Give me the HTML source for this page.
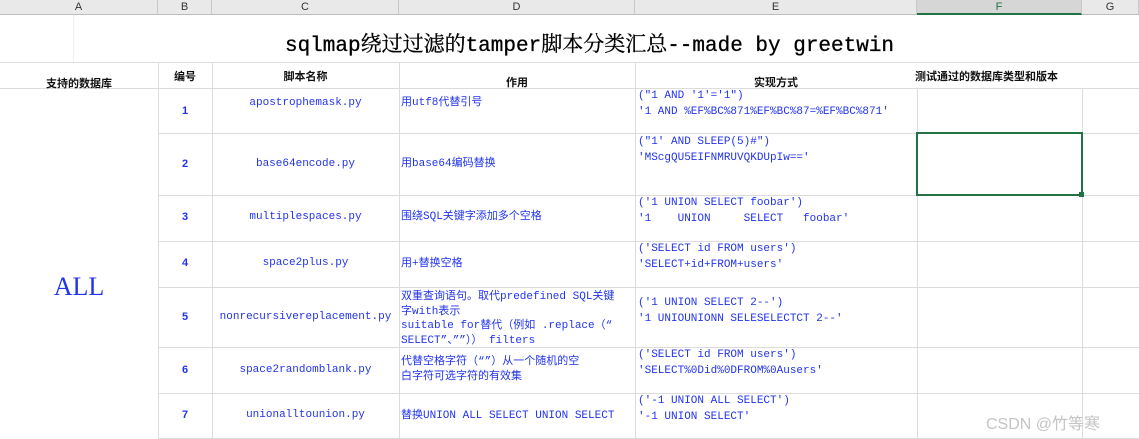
<!DOCTYPE html>
<html><head><meta charset="utf-8"><style>
*{margin:0;padding:0;box-sizing:border-box}
body{width:1139px;height:439px;background:#fff;position:relative;overflow:hidden;font-family:"Liberation Mono","Noto Sans CJK SC",monospace;}
.h{position:absolute;top:0;height:15px;background:#e9e9e9;border-right:1px solid #c8c8c8;border-bottom:1px solid #bdbdbd;font:11px "Liberation Sans",sans-serif;color:#333;text-align:center;line-height:15px}
.vl{position:absolute;width:1px;background:#dcdcdc}
.hl{position:absolute;height:1px;background:#dcdcdc}
.b{position:absolute;font:bold 11px "Liberation Sans","Noto Sans CJK SC",sans-serif;color:#111;white-space:nowrap}
.n{position:absolute;font:bold 11px "Liberation Sans",sans-serif;color:#2233ee;width:54px;text-align:center;left:158px}
.c{position:absolute;left:212px;width:187px;text-align:center;color:#2233ee;font-size:11px}
.d{position:absolute;left:401px;color:#2233ee;font-size:11px;line-height:14px;white-space:nowrap}
.e{position:absolute;left:638px;color:#2233ee;font-size:11px;line-height:16px;white-space:pre}
</style></head><body>
<div class="h" style="left:0;width:158px">A</div>
<div class="h" style="left:158px;width:54px">B</div>
<div class="h" style="left:212px;width:187px">C</div>
<div class="h" style="left:399px;width:236px">D</div>
<div class="h" style="left:635px;width:282px">E</div>
<div class="h" style="left:917px;width:165px;background:#d6d6d6;border-bottom:2px solid #217346;color:#217346">F</div>
<div class="h" style="left:1082px;width:57px">G</div>

<div style="position:absolute;left:0;top:28px;width:1139px;text-align:center;font:21px 'Liberation Mono','Noto Serif CJK SC',monospace;color:#000;padding-left:40px;-webkit-text-stroke:0.3px #000">sqlmap绕过过滤的tamper脚本分类汇总--made by greetwin</div>

<div class="hl" style="left:0;top:62px;width:1139px"></div>
<div class="hl" style="left:0;top:88px;width:1139px"></div>
<div class="hl" style="left:158px;top:133px;width:981px"></div>
<div class="hl" style="left:158px;top:195px;width:981px"></div>
<div class="hl" style="left:158px;top:241px;width:981px"></div>
<div class="hl" style="left:158px;top:287px;width:981px"></div>
<div class="hl" style="left:158px;top:347px;width:981px"></div>
<div class="hl" style="left:158px;top:393px;width:981px"></div>
<div class="hl" style="left:158px;top:438px;width:981px"></div>
<div class="vl" style="left:158px;top:62px;height:377px"></div>
<div class="vl" style="left:212px;top:62px;height:377px"></div>
<div class="vl" style="left:399px;top:62px;height:377px"></div>
<div class="vl" style="left:635px;top:62px;height:377px"></div>
<div class="vl" style="left:917px;top:88px;height:351px"></div>
<div class="vl" style="left:1082px;top:88px;height:351px"></div>
<div class="vl" style="left:73px;top:15px;height:47px;background:#f0f0f0"></div>

<div class="b" style="left:0;width:158px;text-align:center;top:75px">支持的数据库</div>
<div class="b" style="left:158px;width:54px;text-align:center;top:68px">编号</div>
<div class="b" style="left:212px;width:187px;text-align:center;top:68px">脚本名称</div>
<div class="b" style="left:399px;width:236px;text-align:center;top:74px">作用</div>
<div class="b" style="left:635px;width:282px;text-align:center;top:74px">实现方式</div>
<div class="b" style="left:915px;top:68px">测试通过的数据库类型和版本</div>

<div style="position:absolute;left:0;width:158px;text-align:center;top:272px;font:26px 'Liberation Serif',serif;color:#2233ee">ALL</div>

<div class="n" style="top:105px">1</div>
<div class="n" style="top:158px">2</div>
<div class="n" style="top:211px">3</div>
<div class="n" style="top:257px">4</div>
<div class="n" style="top:311px">5</div>
<div class="n" style="top:364px">6</div>
<div class="n" style="top:409px">7</div>

<div class="c" style="top:97px">apostrophemask.py</div>
<div class="c" style="top:158px">base64encode.py</div>
<div class="c" style="top:211px">multiplespaces.py</div>
<div class="c" style="top:257px">space2plus.py</div>
<div class="c" style="top:311px">nonrecursivereplacement.py</div>
<div class="c" style="top:364px">space2randomblank.py</div>
<div class="c" style="top:409px">unionalltounion.py</div>

<div class="d" style="top:96px">用utf8代替引号</div>
<div class="d" style="top:157px">用base64编码替换</div>
<div class="d" style="top:210px">围绕SQL关键字添加多个空格</div>
<div class="d" style="top:257px">用+替换空格</div>
<div class="d" style="top:290px;line-height:14.7px">双重查询语句。取代predefined SQL关键<br>字with表示<br>suitable for替代（例如 .replace（“<br>SELECT”、””）） filters</div>
<div class="d" style="top:355px;line-height:15px">代替空格字符（“”）从一个随机的空<br>白字符可选字符的有效集</div>
<div class="d" style="top:409px">替换UNION ALL SELECT UNION SELECT</div>

<div class="e" style="top:88px">("1 AND '1'='1")
'1 AND %EF%BC%871%EF%BC%87=%EF%BC%871'</div>
<div class="e" style="top:134px">("1' AND SLEEP(5)#")
'MScgQU5EIFNMRUVQKDUpIw=='</div>
<div class="e" style="top:195px">('1 UNION SELECT foobar')
'1    UNION     SELECT   foobar'</div>
<div class="e" style="top:241px">('SELECT id FROM users')
'SELECT+id+FROM+users'</div>
<div class="e" style="top:295px">('1 UNION SELECT 2--')
'1 UNIOUNIONN SELESELECTCT 2--'</div>
<div class="e" style="top:347px">('SELECT id FROM users')
'SELECT%0Did%0DFROM%0Ausers'</div>
<div class="e" style="top:393px">('-1 UNION ALL SELECT')
'-1 UNION SELECT'</div>

<div style="position:absolute;left:916px;top:132px;width:167px;height:64px;border:2px solid #217346"></div>
<div style="position:absolute;left:1079px;top:192px;width:5px;height:5px;background:#217346"></div>

<div style="position:absolute;left:986px;top:410px;font:16px 'Liberation Sans','Noto Sans CJK SC',sans-serif;color:#c4c4c4">CSDN @竹等寒</div>
</body></html>
